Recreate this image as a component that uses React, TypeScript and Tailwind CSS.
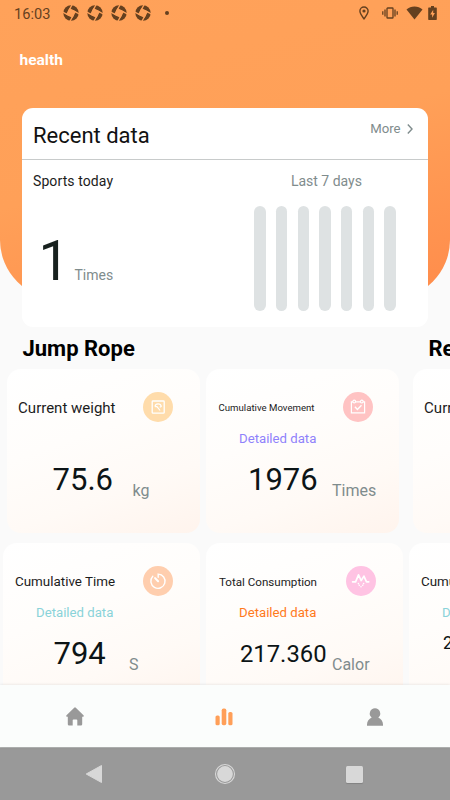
import React from 'react';

interface Metric {
  title: string;
  titleClass: string;
  link?: string;
  linkClass?: string;
  value: string;
  valueClass: string;
  unit: string;
  icon: React.ReactNode;
  iconClass: string;
}

const WeightIcon = () => (
  <svg width="30" height="30" viewBox="0 0 30 30" fill="none" stroke="white">
    <rect x="9.2" y="9" width="12" height="12.2" rx="0.8" strokeWidth="1.3" />
    <path d="M12 14.6c.2-1.8 1.4-2.8 3.1-2.8s2.9 1 3.2 2.6l-1.6.9M12.2 14.6h1.8l3.1 3.9" strokeWidth="1.2" strokeLinejoin="round" />
  </svg>
);

const CalendarIcon = () => (
  <svg width="30" height="30" viewBox="0 0 30 30" fill="none" stroke="white" strokeWidth="1.2">
    <path d="M9.8 9.9H8.4v10.9h13.2V9.9h-1.4M12.6 9.9h4.8" />
    <circle cx="11.2" cy="9.6" r="1.4" />
    <circle cx="18.8" cy="9.6" r="1.4" />
    <path d="M11.9 14.7l2.5 2.7 4.1-4.1" strokeWidth="1.4" />
  </svg>
);

const TimerIcon = () => (
  <svg width="30" height="30" viewBox="0 0 30 30" fill="none" stroke="white" strokeWidth="1.4" strokeLinecap="round">
    <path d="M15.2 11.2V8.1a7.1 7.1 0 1 1-5.4 2.2" />
    <path d="M12.1 12.1l3 3.2" strokeWidth="2" />
  </svg>
);

const PulseIcon = () => (
  <svg width="30" height="30" viewBox="0 0 30 30" fill="none" stroke="white" strokeLinecap="round" strokeLinejoin="round">
    <path d="M6.6 15.8h3l2.9-7 2.7 5.8 2.7-4.5 2.6 5.7h2.2" strokeWidth="1.7" />
    <path d="M12.4 17.6h.01M17.6 17.6h.01M13.3 19.2h.01M16.7 19.2h.01M15 20.7h.01" strokeWidth="1.6" />
  </svg>
);

const topMetrics: Metric[] = [
  {
    title: 'Current weight',
    titleClass: 'w-[136px] pl-[11.5px] text-[15px]',
    value: '75.6',
    valueClass: 'pl-[46px] text-[31px]',
    unit: 'kg',
    icon: <WeightIcon />,
    iconClass: 'bg-[#ffdcab]',
  },
  {
    title: 'Cumulative Movement',
    titleClass: 'w-[137px] pl-[12.5px] text-[9.65px]',
    link: 'Detailed data',
    linkClass: 'pl-[33px] text-[#8f82fb]',
    value: '1976',
    valueClass: 'pl-[42px] text-[31px]',
    unit: 'Times',
    icon: <CalendarIcon />,
    iconClass: 'bg-[#ffc3c3]',
  },
];

const bottomMetrics: Metric[] = [
  {
    title: 'Cumulative Time',
    titleClass: 'w-[140px] pl-[12px] text-[13.4px]',
    link: 'Detailed data',
    linkClass: 'pl-[33px] text-[#8ad3d9]',
    value: '794',
    valueClass: 'pl-[50.5px] text-[31px]',
    unit: 'S',
    icon: <TimerIcon />,
    iconClass: 'bg-[#ffceae]',
  },
  {
    title: 'Total Consumption',
    titleClass: 'w-[139.5px] pl-[13px] text-[11.6px]',
    link: 'Detailed data',
    linkClass: 'pl-[33px] text-[#ff7a1c]',
    value: '217.360',
    valueClass: 'pl-[34px] text-[23.8px]',
    unit: 'Calor',
    icon: <PulseIcon />,
    iconClass: 'bg-[#ffc3e3]',
  },
];

const rebotMetrics: Metric[] = [
  {
    ...bottomMetrics[0],
    value: '259',
    valueClass: 'pl-[34px] -mt-[11px] text-[17.5px]',
  },
  bottomMetrics[1],
];

const MetricCard: React.FC<{ metric: Metric }> = ({ metric }) => (
  <div className="flex-1 h-[164px] pt-[23.5px] rounded-[14px] bg-[linear-gradient(160deg,#ffffff_0%,#fffdfb_40%,#fffaf6_70%,#fff4ed_100%)]">
    <div className="flex items-center h-[30px]">
      <span className={`shrink-0 pt-[2.5px] text-[#1c1c1c] whitespace-nowrap ${metric.titleClass}`}>{metric.title}</span>
      <span className={`shrink-0 size-[30px] rounded-full ${metric.iconClass}`}>{metric.icon}</span>
    </div>
    <div className={`h-5 mt-[7px] text-[13.2px] leading-5 ${metric.linkClass ?? ''}`}>{metric.link}</div>
    <div className="flex items-start mt-[10.5px]">
      <span className={`shrink-0 w-[126px] leading-10 text-[#0c1416] ${metric.valueClass}`}>{metric.value}</span>
      <span className="mt-[21px] text-base leading-5 text-[#7f8c8d]">{metric.unit}</span>
    </div>
  </div>
);

const Section: React.FC<{ name: string; top: Metric[]; bottom: Metric[] }> = ({ name, top, bottom }) => (
  <section className="shrink-0 w-[406px]">
    <h2 className="pl-[22.5px] h-[42px] pt-[7px] text-[22px] leading-[30px] font-bold text-black">{name}</h2>
    <div className="flex gap-[6px] pl-[6.6px] pr-[6.6px]">
      {top.map(m => <MetricCard key={m.title} metric={m} />)}
    </div>
    <div className="flex gap-[6px] px-[3px] mt-[10px]">
      {bottom.map(m => <MetricCard key={m.title} metric={m} />)}
    </div>
  </section>
);

const ShutterIcon = () => (
  <svg width="16" height="16" viewBox="0 0 16 16" fill="none">
    <circle cx="8" cy="8" r="7.7" fill="#65401f" />
    <g transform="rotate(28 8 8)">
      <rect x="4.3" y="4.3" width="7.4" height="7.4" fill="#ffa159" />
      <path d="M5 8V0M8 5h8M11 8v8M8 11H0" stroke="#ffa159" strokeWidth="1.3" />
    </g>
  </svg>
);

const StatusBar = () => (
  <div className="flex items-center h-[26px] pl-[14px] pr-[13px]">
    <span className="w-[48.5px] text-[14.6px] leading-[26px] pt-px text-[#65401f]">16:03</span>
    <div className="flex gap-[8.2px]">
      {[0, 1, 2, 3].map(i => <ShutterIcon key={i} />)}
    </div>
    <span className="ml-[14px] size-1 rounded-full bg-[#65401f]" />
    <svg className="ml-auto" width="10" height="14" viewBox="0 0 10 14" fill="none" stroke="#65401f">
      <path d="M5 12.9C3 10.2.9 7.6.9 5.1a4.1 4.1 0 0 1 8.2 0c0 2.5-2.1 5.1-4.1 7.8z" strokeWidth="1.4" />
      <circle cx="5" cy="5" r="1.6" fill="#65401f" stroke="none" />
    </svg>
    <svg className="ml-[13px]" width="16" height="12" viewBox="0 0 16 12" fill="none" stroke="#65401f">
      <rect x="5" y="1" width="6" height="10" rx=".6" strokeWidth="1.3" />
      <path d="M3 2.5v7M13 2.5v7M.8 4.2v3.6M15.2 4.2v3.6" strokeWidth="1.3" />
    </svg>
    <svg className="ml-[8px]" width="17" height="14" viewBox="0 0 17 14" fill="#65401f">
      <path d="M8.5 13.6L.5 3.6C2.7 1.5 5.4.5 8.5.5s5.8 1 8 3.1z" />
    </svg>
    <svg className="ml-[5.5px]" width="9" height="14" viewBox="0 0 9 14">
      <path d="M3 0h3v1.4h2.2q.6 0 .6.6v11.3q0 .6-.6.6H.8q-.6 0-.6-.6V2q0-.6.6-.6H3z" fill="#65401f" />
      <path d="M5.2 3.7L2.2 8.4h1.9v3.4l2.8-4.9H5.2z" fill="#ffa159" />
    </svg>
  </div>
);

const RecentCard = () => (
  <div className="mx-[22px] -mt-[191px] h-[218.5px] rounded-[11px] bg-white">
    <div className="flex items-start justify-between h-[52px] pl-[11px] pr-[15.5px] border-b border-[#c8cbcb]">
      <h1 className="pt-[12.5px] text-[22px] leading-[30px] text-[#111]">Recent data</h1>
      <div className="flex items-center h-5 mt-[11px] text-[13.2px] text-[#7f8c8d]">
        More
        <svg className="ml-[6px]" width="6" height="10" viewBox="0 0 6 10" fill="none" stroke="#7f8c8d" strokeWidth="1.4">
          <path d="M.8.6L5 5 .8 9.4" />
        </svg>
      </div>
    </div>
    <div className="flex justify-between pl-[11px] pr-[32.3px]">
      <div>
        <p className="mt-[11px] text-sm tracking-[0.1px] text-[#1c1c1c]">Sports today</p>
        <div className="flex items-baseline mt-[38px] pl-[5.5px]">
          <span className="w-[36px] text-[55px] leading-[64px] text-[#18211f]">1</span>
          <span className="text-sm text-[#7f8c8d]">Times</span>
        </div>
      </div>
      <div className="w-[141.5px]">
        <p className="mt-[11px] pl-[3px] text-sm text-center text-[#7f8c8d]">Last 7 days</p>
        <div className="flex justify-between mt-[15px]">
          {[0, 1, 2, 3, 4, 5, 6].map(day => (
            <span key={day} className="w-[11.3px] h-[105px] rounded-full bg-[#dee2e3]" />
          ))}
        </div>
      </div>
    </div>
  </div>
);

const TabBar = () => (
  <nav className="relative grid grid-cols-3 place-items-center h-[62px] shrink-0 bg-[#fbfdfc] shadow-[0_0_3px_rgba(0,0,0,0.12)]">
    <svg width="18" height="19" viewBox="0 0 18 19" fill="#999">
      <path d="M8.2.7q.8-.7 1.6 0l7.7 7.6q.9 1.2-.5 1.4h-.8v7.5q0 1.3-1.3 1.3h-3.6v-5.3q0-.8-.8-.8h-3q-.8 0-.8.8v5.3H3.1q-1.3 0-1.3-1.3V9.7H1Q-.4 9.500.5 8.3z" />
    </svg>
    <svg className="mr-[1.5px] mt-px" width="18" height="18" viewBox="0 0 18 18" fill="#ff9f58">
      <rect x=".5" y="7.5" width="4.2" height="9.8" rx="1.6" />
      <rect x="6.7" y=".5" width="4.6" height="16.8" rx="1.8" />
      <rect x="13.3" y="4" width="4.2" height="13.3" rx="1.6" />
    </svg>
    <svg className="mt-px" width="16" height="18" viewBox="0 0 16 18" fill="#999">
      <path d="M8 .2a5.3 5.3 0 0 1 3.3 9.4c2.7 1.3 4.7 3.9 4.7 7v1.2H0v-1.2c0-3.1 2-5.7 4.7-7A5.3 5.3 0 0 1 8 .2z" />
    </svg>
  </nav>
);

const SystemBar = () => (
  <div className="flex items-center justify-between h-[53px] shrink-0 pl-[85px] pr-[87px] bg-[#999] border-t border-[#b4b6b5]">
    <svg width="18" height="20" viewBox="0 0 18 20">
      <path d="M16.5 1.5v17L1.2 10z" fill="#d8d8d8" stroke="#d8d8d8" strokeLinejoin="round" />
    </svg>
    <svg className="ml-px" width="22" height="22" viewBox="0 0 22 22">
      <circle cx="11" cy="11" r="9.5" fill="none" stroke="#d8d8d8" strokeWidth="1.1" />
      <circle cx="11" cy="11" r="7.9" fill="#d8d8d8" />
    </svg>
    <span className="size-[17px] rounded-[1.5px] bg-[#d8d8d8] shadow-[0_1px_1px_rgba(0,0,0,0.15)]" />
  </div>
);

const App: React.FC = () => (
  <div className="flex flex-col w-full h-[800px] overflow-hidden bg-[#fafafa] font-['Roboto',sans-serif]">
    <main className="flex-1 min-h-0 overflow-hidden">
      <header className="h-[299px] rounded-b-[59px] bg-[linear-gradient(165deg,#ffa25a_0%,#ffa058_50%,#ff8c4b_100%)]">
        <StatusBar />
        <p className="pl-[19.5px] pt-[24px] text-[15.5px] leading-5 font-bold text-white">health</p>
      </header>
      <RecentCard />
      <div className="flex w-full overflow-hidden">
        <Section name="Jump Rope" top={topMetrics} bottom={bottomMetrics} />
        <Section name="Rebot" top={topMetrics} bottom={rebotMetrics} />
      </div>
    </main>
    <TabBar />
    <SystemBar />
  </div>
);

export default App;
